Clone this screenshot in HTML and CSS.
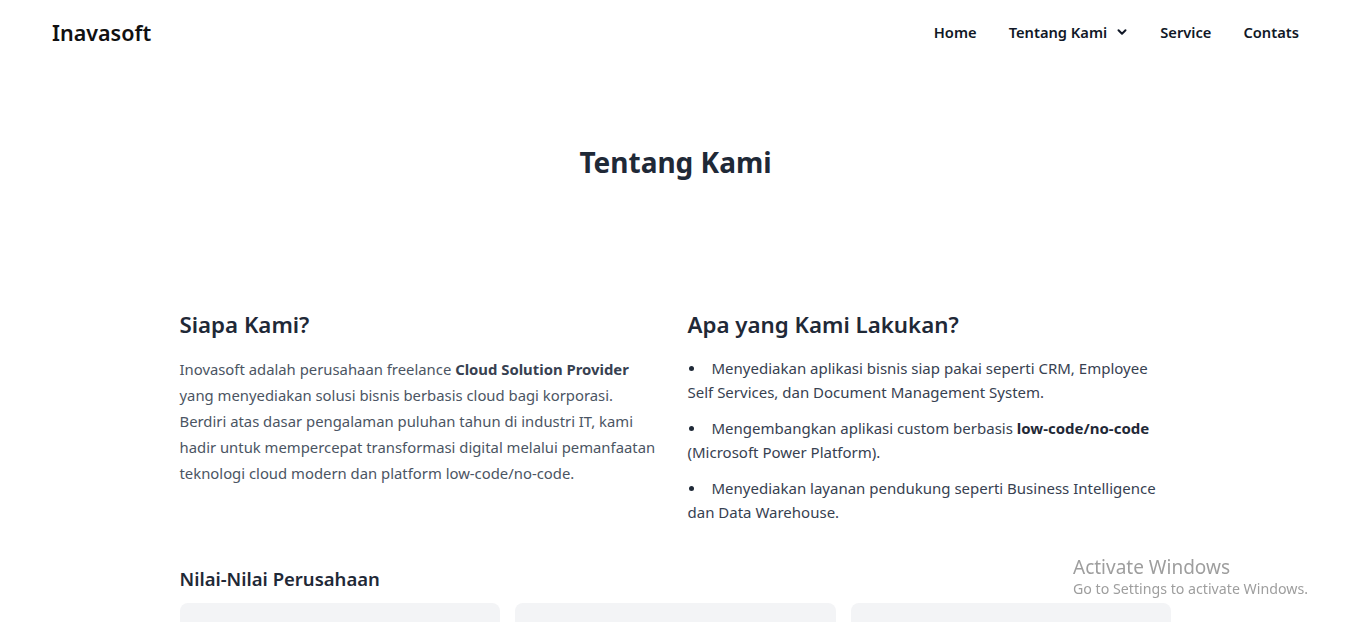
FILE: index.html
```html
<!DOCTYPE html>
<html lang="id">
<head>
<meta charset="utf-8">
<title>Inavasoft - Tentang Kami</title>
<link rel="stylesheet" href="styles.css">
</head>
<body>
<header class="navbar">
  <div class="logo">Inavasoft</div>
  <nav class="nav">
    <a class="nav-link" href="#">Home</a>
    <a class="nav-link nav-dropdown" href="#">Tentang Kami
      <svg class="chev" width="12" height="12" viewBox="0 0 12 12"><path d="M2.5 4.2 L6 7.7 L9.5 4.2" fill="none" stroke="currentColor" stroke-width="2" stroke-linecap="round" stroke-linejoin="round"/></svg>
    </a>
    <a class="nav-link" href="#">Service</a>
    <a class="nav-link" href="#">Contats</a>
  </nav>
</header>

<main>
  <section class="hero">
    <h1 class="page-title">Tentang Kami</h1>
  </section>

  <section class="container">
    <div class="two-col">
      <div class="col">
        <h2 class="section-title">Siapa Kami?</h2>
        <p class="body-text">Inovasoft adalah perusahaan freelance <strong>Cloud Solution Provider</strong> yang menyediakan solusi bisnis berbasis cloud bagi korporasi. Berdiri atas dasar pengalaman puluhan tahun di industri IT, kami hadir untuk mempercepat transformasi digital melalui pemanfaatan teknologi cloud modern dan platform low-code/no-code.</p>
      </div>
      <div class="col">
        <h2 class="section-title">Apa yang Kami Lakukan?</h2>
        <ul class="list">
          <li><span class="dot"></span>Menyediakan aplikasi bisnis siap pakai seperti CRM, Employee Self Services, dan Document Management System.</li>
          <li><span class="dot"></span>Mengembangkan aplikasi custom berbasis <strong>low-code/no-code</strong> (Microsoft Power Platform).</li>
          <li><span class="dot"></span>Menyediakan layanan pendukung seperti Business Intelligence dan Data Warehouse.</li>
        </ul>
      </div>
    </div>

    <h3 class="sub-title">Nilai-Nilai Perusahaan</h3>
    <div class="cards">
      <div class="card"></div>
      <div class="card"></div>
      <div class="card"></div>
    </div>
  </section>
</main>

<div class="watermark">
  <div class="wm-title">Activate Windows</div>
  <div class="wm-sub">Go to Settings to activate Windows.</div>
</div>
</body>
</html>
```

FILE: styles.css
```css
* { box-sizing: border-box; }
html, body { margin: 0; padding: 0; }
body {
  font-family: "Segoe UI", "Noto Sans", "Open Sans", sans-serif;
  background: #ffffff;
  color: #1f2937;
  overflow: hidden;
  height: 622px;
}
.navbar {
  height: 64px;
  display: flex;
  align-items: center;
  justify-content: space-between;
  padding: 0 52px;
}
.logo {
  font-size: 21.5px;
  font-weight: 600;
  color: #111111;
}
.nav {
  display: flex;
  align-items: center;
  gap: 32px;
}
.nav-link {
  color: #111827;
  text-decoration: none;
  font-size: 14.7px;
  font-weight: 600;
  display: flex;
  align-items: center;
}
.chev { margin-left: 9px; }
.hero {
  padding: 76px 0 0;
  text-align: center;
}
.page-title {
  margin: 0;
  font-size: 28px;
  font-weight: 700;
  color: #1f2937;
  line-height: 44px;
}
.container {
  width: 992px;
  margin: 0 auto;
  padding-top: 125px;
}
.two-col {
  display: grid;
  grid-template-columns: 1fr 1fr;
  column-gap: 24px;
}
.section-title {
  margin: 0 0 15px;
  font-size: 22.3px;
  font-weight: 600;
  line-height: 32px;
  color: #1f2937;
}
.body-text {
  margin: 0;
  font-size: 14.85px;
  line-height: 26px;
  color: #4b5563;
}
.body-text strong { color: #374151; font-weight: 700; }
.list strong { color: #1f2937; font-weight: 700; }
.list {
  list-style: none;
  margin: 0;
  padding: 0;
  font-size: 15px;
  line-height: 24px;
  color: #374151;
}
.list li { margin-bottom: 12px; }
.dot {
  display: inline-block;
  width: 5px;
  height: 5px;
  border-radius: 50%;
  background: #1f2937;
  margin: 0 18px 0 1px;
  vertical-align: middle;
  position: relative;
  top: -1px;
}
.sub-title {
  margin: 29px 0 10px;
  font-size: 18.5px;
  font-weight: 600;
  line-height: 28px;
  color: #1f2937;
}
.cards {
  display: grid;
  grid-template-columns: repeat(3, 1fr);
  gap: 15px;
}
.card {
  height: 120px;
  background: #f3f4f6;
  border-radius: 8px;
}
.watermark {
  position: fixed;
  left: 1073px;
  top: 556px;
  color: #9e9e9e;
  pointer-events: none;
}
.wm-title { font-size: 19px; line-height: 23px; }
.wm-sub { font-size: 14.2px; line-height: 20px; }
```
